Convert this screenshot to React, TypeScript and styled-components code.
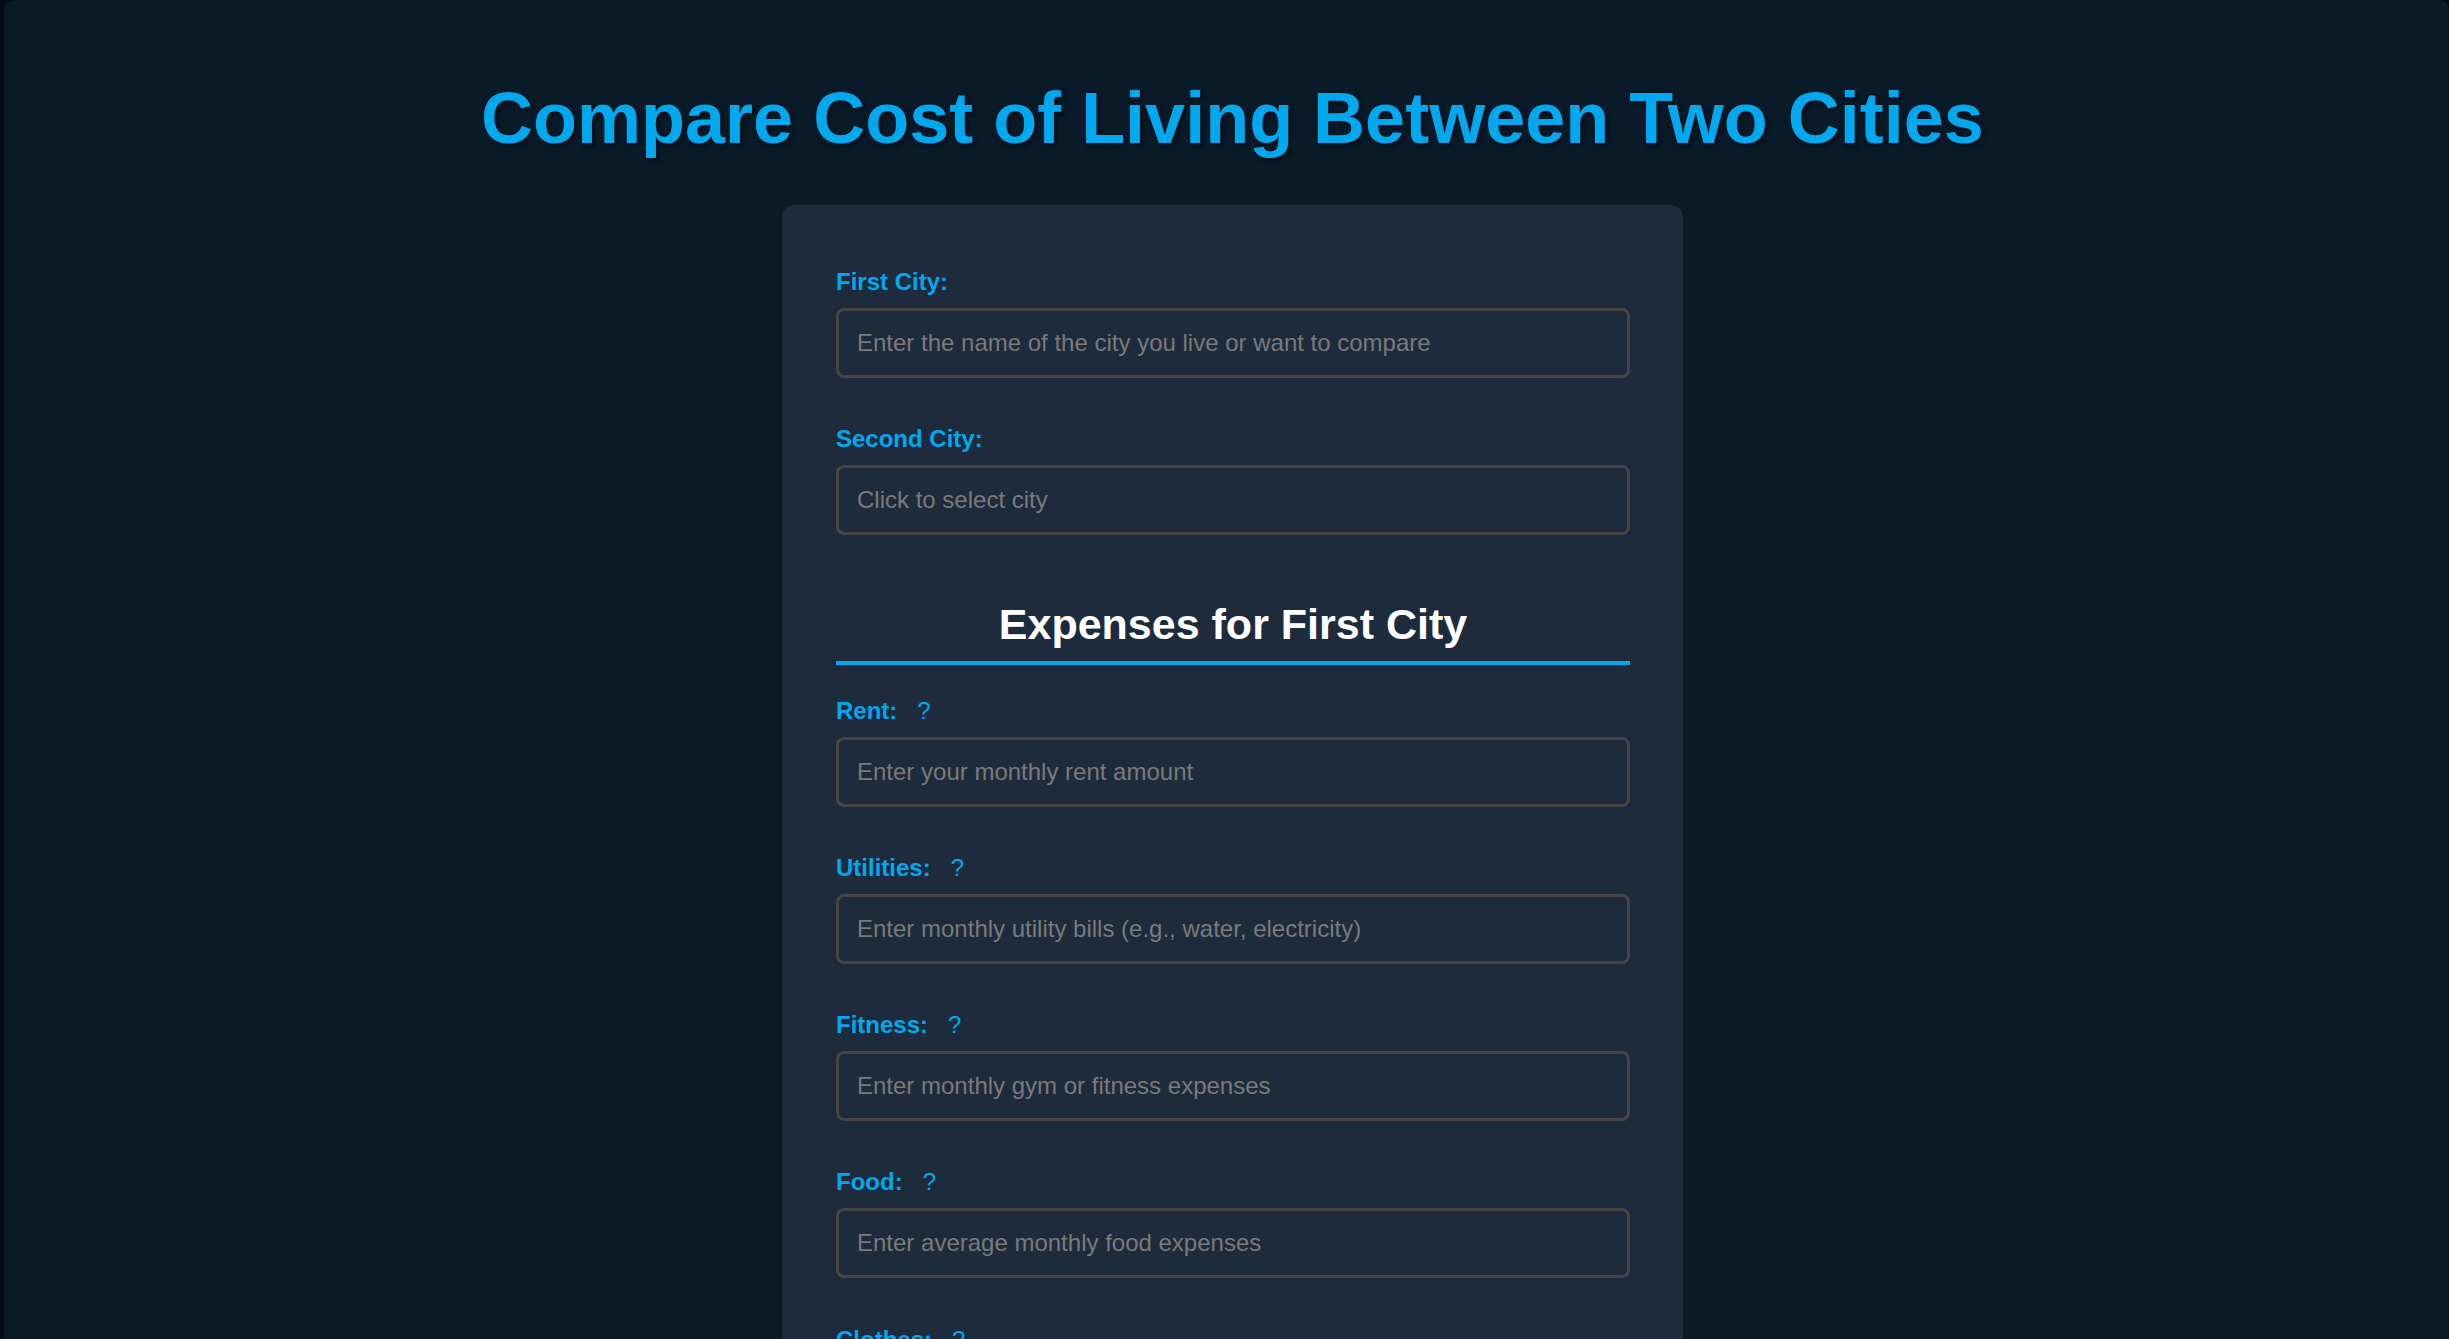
import React from "react";
import styled, { createGlobalStyle } from "styled-components";

const GlobalStyle = createGlobalStyle`
  html, body {
    margin: 0;
    padding: 0;
    background: #040a18;
    overflow-x: hidden;
  }
  body {
    font-family: "Liberation Sans", Arial, sans-serif;
  }
  * { box-sizing: border-box; }
`;

const Page = styled.div`
  margin-left: 4px;
  min-height: 100vh;
  background: #091a28;
  border-radius: 10px;
  padding: 77px 0 60px 12px;
`;

const Title = styled.h1`
  margin: 0 0 46px;
  text-align: center;
  font-size: 72px;
  font-weight: 700;
  line-height: normal;
  color: #02a8ee;
  text-shadow: 2px 2px 4px rgba(0, 0, 0, 0.55);
`;

const Card = styled.form`
  width: 901px;
  margin: 0 auto;
  padding: 62.5px 53px 50px 54px;
  background: #1e2b3c;
  border-radius: 12px;
  display: flex;
  flex-direction: column;
`;

const Field = styled.div`
  display: flex;
  flex-direction: column;
  margin-bottom: 47.2px;
`;

const Label = styled.label`
  display: block;
  margin-bottom: 12px;
  font-size: 24px;
  font-weight: 700;
  line-height: normal;
  color: #02a8ee;
`;

const Help = styled.span`
  margin-left: 20px;
  font-weight: 400;
  color: #02a8ee;
  cursor: help;
`;

const Input = styled.input`
  width: 100%;
  padding: 18px;
  font-family: "Liberation Sans", Arial, sans-serif;
  font-size: 24px;
  line-height: normal;
  color: #e6e6e6;
  background: #1e2b3c;
  border: 3px solid #454545;
  border-radius: 8px;
  outline: none;
  &::placeholder {
    color: #7a7a7a;
  }
`;

const SectionTitle = styled.h2`
  margin: 18.5px 0 31.5px;
  padding-bottom: 12px;
  border-bottom: 4px solid #02a8ee;
  text-align: center;
  font-size: 43px;
  font-weight: 700;
  line-height: normal;
  color: #ffffff;
`;

const SubmitButton = styled.button`
  padding: 18px;
  font-family: "Liberation Sans", Arial, sans-serif;
  font-size: 24px;
  font-weight: 700;
  color: #ffffff;
  background: #02a8ee;
  border: none;
  border-radius: 8px;
  cursor: pointer;
`;

type Expense = { name: string; placeholder: string };

const expenses: Expense[] = [
  { name: "Rent", placeholder: "Enter your monthly rent amount" },
  { name: "Utilities", placeholder: "Enter monthly utility bills (e.g., water, electricity)" },
  { name: "Fitness", placeholder: "Enter monthly gym or fitness expenses" },
  { name: "Food", placeholder: "Enter average monthly food expenses" },
  { name: "Clothes", placeholder: "Enter monthly clothing expenses" },
  { name: "Transportation", placeholder: "Enter monthly transportation costs" },
  { name: "Entertainment", placeholder: "Enter monthly entertainment expenses" },
];

export default function App() {
  return (
    <>
      <GlobalStyle />
      <Page>
        <Title>Compare Cost of Living Between Two Cities</Title>
        <Card onSubmit={(e) => e.preventDefault()}>
          <Field>
            <Label htmlFor="city1">First City:</Label>
            <Input id="city1" type="text" placeholder="Enter the name of the city you live or want to compare" />
          </Field>
          <Field>
            <Label htmlFor="city2">Second City:</Label>
            <Input id="city2" type="text" placeholder="Click to select city" readOnly />
          </Field>
          <SectionTitle>Expenses for First City</SectionTitle>
          {expenses.map((ex) => (
            <Field key={ex.name}>
              <Label htmlFor={ex.name}>
                {ex.name}:<Help title={ex.placeholder}>?</Help>
              </Label>
              <Input id={ex.name} type="number" placeholder={ex.placeholder} />
            </Field>
          ))}
          <SubmitButton type="submit">Compare</SubmitButton>
        </Card>
      </Page>
    </>
  );
}
